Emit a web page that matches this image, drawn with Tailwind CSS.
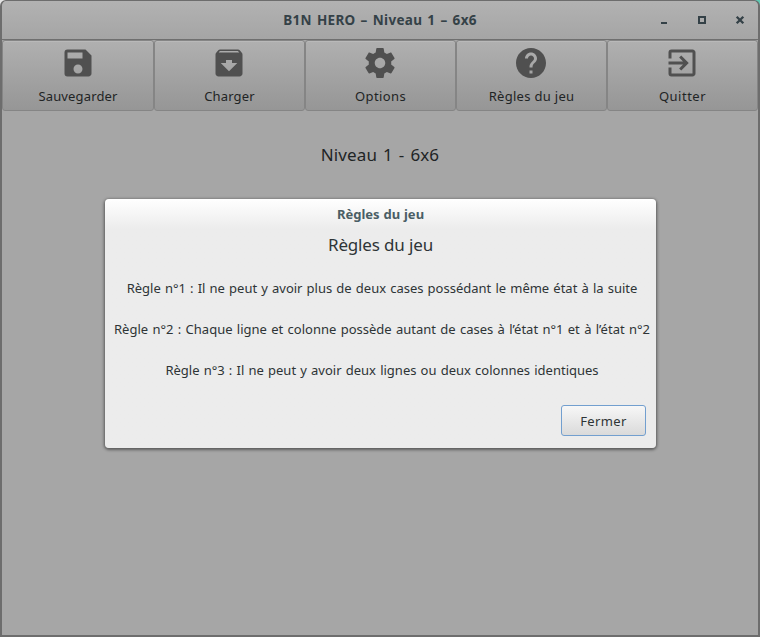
<!DOCTYPE html>
<html lang="fr">
<head>
<meta charset="utf-8">
<title>B1N HERO</title>
<script src="https://cdn.jsdelivr.net/npm/@tailwindcss/browser@4"></script>
</head>
<body class="w-[760px] h-[637px] overflow-hidden bg-linear-to-r from-[#e4e4e4] from-50% to-[#5fc9b4] to-50% font-['Noto_Sans','Open_Sans',sans-serif] text-[13px] text-[#1f2425]">
<div class="relative flex h-[637px] w-[760px] flex-col rounded-t-[6px] border-x-2 border-t border-b-2 border-[#6d6d6d] bg-[#a6a6a6]">
  <header class="flex h-[38px] shrink-0 items-center rounded-t-[5px] bg-linear-to-b from-[#b2b2b2] to-[#a5a5a5]">
    <div class="w-[100px]"></div>
    <h1 class="flex-1 text-center text-[13.500px] font-bold leading-[20px] tracking-[0.3px] text-[#344147] [word-spacing:1.300px]"><span>B1N HERO – Niveau 1 – 6x6</span></h1>
    <div class="flex w-[100px] shrink-0 items-center">
      <svg class="h-[12px] w-[100px]" viewBox="0 0 100 12" fill="none"><path d="M3 9h6" stroke="#344147" stroke-width="2"/><rect x="41" y="3" width="6" height="6" stroke="#344147" stroke-width="2"/><path d="M78.700 2.700l6.600 6.600M85.300 2.700l-6.600 6.600" stroke="#344147" stroke-width="2.300"/></svg>
    </div>
  </header>
  <nav class="grid h-[72px] shrink-0 grid-cols-[152px_151px_151px_151px_151px] border-t border-[#6f6f6f] tracking-[0.15px] [word-spacing:1px]">
    <button class="flex flex-col items-center rounded-[3px] border border-[#858585] bg-linear-to-b from-[#b0b0b0] to-[#969696] pt-[4px] shadow-[inset_0_1px_0_#b9b9b9]">
      <svg class="size-[36px]" viewBox="0 0 24 24" fill="#505050"><path d="M17 3H5a2 2 0 0 0-2 2v14a2 2 0 0 0 2 2h14c1.100 0 2-.9 2-2V7zm-5 16c-1.660 0-3-1.340-3-3s1.340-3 3-3 3 1.340 3 3-1.340 3-3 3zm3-10H5V5h10z"/></svg>
      <span class="mt-[5px] leading-[20px]">Sauvegarder</span></button>
    <button class="flex flex-col items-center rounded-[3px] border border-[#858585] bg-linear-to-b from-[#b0b0b0] to-[#969696] pt-[4px] shadow-[inset_0_1px_0_#b9b9b9]">
      <svg class="mr-[1px] size-[36px]" viewBox="0 0 24 24" fill="#505050"><path d="M20.540 5.230l-1.390-1.680C18.880 3.210 18.470 3 18 3H6c-.47 0-.88.21-1.160.55L3.460 5.230C3.170 5.570 3 6.020 3 6.500V19c0 1.100.9 2 2 2h14c1.100 0 2-.9 2-2V6.500c0-.48-.17-.93-.46-1.270zM12 17.500L6.500 12H10v-2h4v2h3.500L12 17.500zM5.120 5l.81-1h12l.94 1H5.120z"/></svg>
      <span class="mt-[5px] leading-[20px]">Charger</span></button>
    <button class="flex flex-col items-center rounded-[3px] border border-[#858585] bg-linear-to-b from-[#b0b0b0] to-[#969696] pt-[4px] shadow-[inset_0_1px_0_#b9b9b9]">
      <svg class="mr-[1px] size-[36px]" viewBox="0 0 24 24" fill="#505050"><path d="M19.430 12.980c.04-.32.070-.64.070-.98s-.03-.66-.07-.98l2.110-1.650c.19-.15.24-.42.120-.64l-2-3.460c-.12-.22-.39-.3-.61-.22l-2.490 1c-.52-.4-1.080-.73-1.690-.98l-.38-2.650C14.460 2.180 14.250 2 14 2h-4c-.25 0-.46.18-.49.420l-.38 2.650c-.61.25-1.170.59-1.690.98l-2.490-1c-.23-.09-.49 0-.61.22l-2 3.460c-.13.22-.07.49.12.640l2.110 1.650c-.04.32-.07.65-.07.980s.03.66.07.980l-2.110 1.650c-.19.15-.24.42-.12.640l2 3.460c.12.22.39.3.61.220l2.490-1c.52.4 1.080.73 1.690.980l.38 2.650c.03.24.24.42.49.420h4c.25 0 .46-.18.49-.42l.38-2.650c.61-.25 1.170-.59 1.690-.98l2.490 1c.23.09.49 0 .61-.22l2-3.460c.12-.22.07-.49-.12-.64l-2.110-1.650zM12 15.500c-1.930 0-3.500-1.570-3.500-3.500s1.570-3.500 3.500-3.500 3.500 1.570 3.500 3.500-1.570 3.500-3.500 3.500z"/></svg>
      <span class="mt-[5px] leading-[20px] tracking-[0.4px]">Options</span></button>
    <button class="flex flex-col items-center rounded-[3px] border border-[#858585] bg-linear-to-b from-[#b0b0b0] to-[#969696] pt-[4px] shadow-[inset_0_1px_0_#b9b9b9]">
      <svg class="mr-[1px] size-[36px]" viewBox="0 0 24 24" fill="#505050"><path d="M12 2C6.480 2 2 6.480 2 12s4.480 10 10 10 10-4.480 10-10S17.520 2 12 2zm1 17h-2v-2h2v2zm2.070-7.750l-.9.920C13.450 12.900 13 13.500 13 15h-2v-.5c0-1.100.45-2.100 1.170-2.830l1.240-1.260c.37-.36.59-.86.59-1.410 0-1.100-.9-2-2-2s-2 .9-2 2H8c0-2.210 1.790-4 4-4s4 1.790 4 4c0 .88-.36 1.680-.93 2.250z"/></svg>
      <span class="mt-[5px] leading-[20px] tracking-[0.3px]">Règles du jeu</span></button>
    <button class="flex flex-col items-center rounded-[3px] border border-[#858585] bg-linear-to-b from-[#b0b0b0] to-[#969696] pt-[4px] shadow-[inset_0_1px_0_#b9b9b9]">
      <svg class="mr-[1px] size-[36px]" viewBox="0 0 24 24" fill="#505050"><path d="M10.090 15.590L11.500 17l5-5-5-5-1.410 1.410L12.670 11H3v2h9.670l-2.580 2.590zM19 3H5a2 2 0 0 0-2 2v4h2V5h14v14H5v-4H3v4a2 2 0 0 0 2 2h14c1.100 0 2-.9 2-2V5c0-1.100-.9-2-2-2z"/></svg>
      <span class="mt-[5px] leading-[20px] tracking-[0.5px]">Quitter</span></button>
  </nav>
  <h2 class="mt-[30px] text-center text-[17px] leading-[28px] tracking-[0.1px] [word-spacing:1.500px]"><span>Niveau 1 - 6x6</span></h2>
  <div role="dialog" class="absolute left-[103px] top-[198px] flex h-[249px] w-[551px] flex-col rounded-[4px] bg-linear-to-b from-white to-[#ececec] to-[30px] text-[#2e3436] shadow-[0_1px_3px_1px_rgba(0,0,0,0.45)]">
    <h3 class="h-[30px] text-center text-[13px] font-bold leading-[30px] text-[#4a5e65] [word-spacing:0.500px]"><span>Règles du jeu</span></h3>
    <p class="text-center text-[17px] leading-[32px] tracking-[-0.15px]"><span>Règles du jeu</span></p>
    <p class="mt-[17px] whitespace-nowrap pl-[3px] text-center leading-[20px] [word-spacing:0.750px]"><span>Règle n°1 : Il ne peut y avoir plus de deux cases possédant le même état à la suite</span></p>
    <p class="mt-[21px] whitespace-nowrap pl-[3px] text-center leading-[20px] [word-spacing:0.950px]"><span>Règle n°2 : Chaque ligne et colonne possède autant de cases à l’état n°1 et à l’état n°2</span></p>
    <p class="mt-[21px] whitespace-nowrap pl-[3px] text-center leading-[20px] [word-spacing:0.800px]"><span>Règle n°3 : Il ne peut y avoir deux lignes ou deux colonnes identiques</span></p>
    <button class="mt-[25px] mr-[10px] h-[31px] w-[85px] self-end rounded-[3px] border border-[#729fcf] bg-linear-to-b from-[#f7f7f7] to-[#dadada] pt-[2px] tracking-[0.4px]"><span>Fermer</span></button>
  </div>
</div>
</body>
</html>
